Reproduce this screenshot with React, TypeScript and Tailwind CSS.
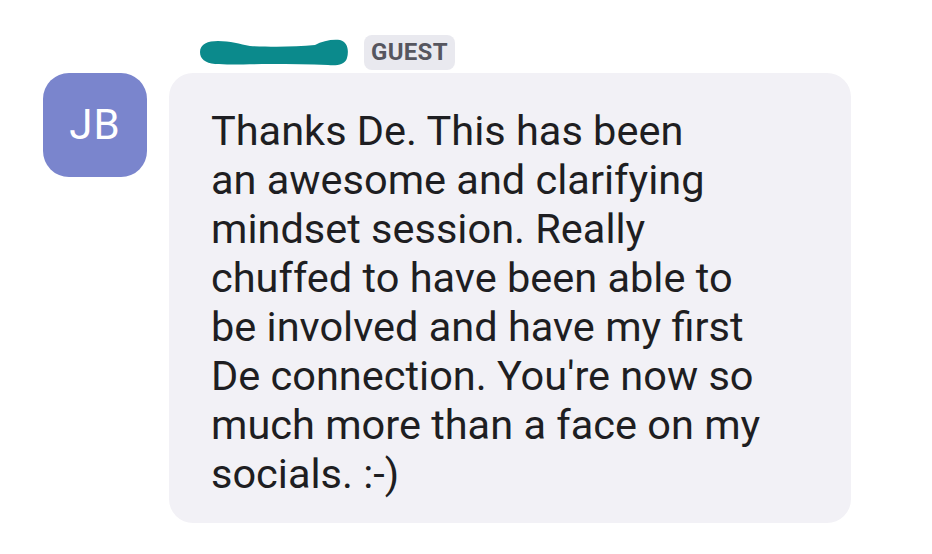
const lines = [
  "Thanks De. This has been",
  "an awesome and clarifying",
  "mindset session. Really",
  "chuffed to have been able to",
  "be involved and have my first",
  "De connection. You're now so",
  "much more than a face on my",
  "socials. :-)",
];

const Scribble = () => (
  <svg width="149" height="28" viewBox="0 0 149 28" className="block">
    <path
      d="M0 13 C0 5 8 2 18 2 C30 2 40 5 50 7 C70 8 95 8 115 6 C122 2 132 0 140 1 C148 3 149 12 147 19 C145 26 136 27 128 26 C110 25 90 25 70 25 C50 25 30 26 15 25 C5 24 0 20 0 13 Z"
      fill="#0b8a8c"
    />
  </svg>
);

export default function App() {
  return (
    <div
      className="w-[932px] h-[554px] bg-white overflow-hidden"
      style={{ fontFamily: "Roboto, 'Noto Sans', sans-serif" }}
    >
      <div className="flex items-center gap-[15px] pl-[200px] pt-[32px] h-[73px]">
        <Scribble />
        <span className="h-[35px] px-[7px] rounded-[8px] bg-[#e9e9ef] text-[#56565f] text-[24px] font-bold leading-[35px] tracking-[0.3px]">
          GUEST
        </span>
      </div>
      <div className="flex items-start gap-[22px] pl-[43px]">
        <div className="w-[104px] h-[104px] rounded-[26px] bg-[#7a85cd] flex items-center justify-center text-white text-[42px] leading-none tracking-[1px]">
          JB
        </div>
        <div className="w-[682px] h-[450px] rounded-[24px] bg-[#f2f1f6] pl-[42px] pt-[33px]">
          <p className="text-[41.5px] leading-[49px] text-[#1e1e22]">
            {lines.map((l, i) => (
              <span key={i} className="block whitespace-nowrap">
                {l}
              </span>
            ))}
          </p>
        </div>
      </div>
    </div>
  );
}
